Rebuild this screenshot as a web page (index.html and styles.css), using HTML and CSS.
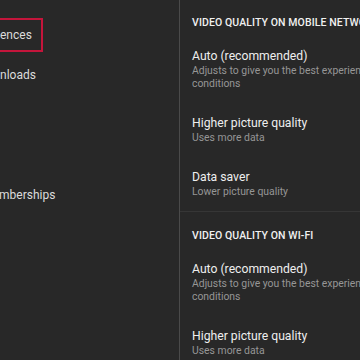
FILE: index.html
```html
<!DOCTYPE html>
<html lang="en">
   <head>
      <meta charset="UTF-8" />
      <meta name="viewport" content="width=device-width, initial-scale=1.0" />
      <title>Settings</title>
      <link rel="stylesheet" href="styles.css">
   </head>
   <body>
      <div class="page">
         <nav class="sidebar">
            <div class="nav-item"><span class="nav-label focused">ences</span></div>
            <div class="nav-item">nloads</div>
            <div class="nav-item"></div>
            <div class="nav-item"></div>
            <div class="nav-item"><span class="nav-label cut">mberships</span></div>
         </nav>
         <main class="content">
            <section class="group">
               <h2>Video quality on mobile networks</h2>
               <div class="option">
                  <div class="title">Auto (recommended)</div>
                  <div class="sub">Adjusts to give you the best experience for your<br />conditions</div>
               </div>
               <div class="option">
                  <div class="title">Higher picture quality</div>
                  <div class="sub">Uses more data</div>
               </div>
               <div class="option">
                  <div class="title">Data saver</div>
                  <div class="sub">Lower picture quality</div>
               </div>
            </section>
            <section class="group">
               <h2>Video quality on Wi-Fi</h2>
               <div class="option">
                  <div class="title">Auto (recommended)</div>
                  <div class="sub">Adjusts to give you the best experience for your<br />conditions</div>
               </div>
               <div class="option">
                  <div class="title">Higher picture quality</div>
                  <div class="sub">Uses more data</div>
               </div>
               <div class="option">
                  <div class="title">Data saver</div>
                  <div class="sub">Lower picture quality</div>
               </div>
            </section>
         </main>
      </div>
   </body>
</html>
```
FILE: styles.css
```css
body {
   margin: 0;
   padding: 0;
   background-color: #282828;
   font-family: Roboto, 'Liberation Sans', sans-serif;
   overflow: hidden;
}

div.page {
   display: flex;
   width: 360px;
   height: 360px;
   overflow: hidden;
}

nav.sidebar {
   flex: none;
   width: 179px;
   padding-top: 15px;
   border-right: 1px solid #4a4a4a;
   overflow: hidden;
}

div.nav-item {
   height: 40px;
   line-height: 40px;
   font-size: 12px;
   color: #dcdcdc;
   white-space: nowrap;
}

span.nav-label.focused {
   display: inline-block;
   margin: 3px 0 0 -13px;
   padding: 0 9px 0 11px;
   height: 30px;
   line-height: 30px;
   border: 2px solid #c4153b;
   vertical-align: top;
}

span.nav-label.cut {
   display: inline-block;
   margin-left: -1px;
}

main.content {
   flex: none;
   width: 340px;
   padding-left: 12px;
   white-space: nowrap;
}

section.group {
   padding-top: 16px;
}

section.group + section.group {
   border-top: 1px solid #363636;
   margin-left: -12px;
   padding-left: 12px;
   padding-top: 17px;
}

h2 {
   margin: 0 0 6px;
   font-size: 10.5px;
   line-height: 14px;
   font-weight: 500;
   letter-spacing: 0.1px;
   text-transform: uppercase;
   color: #f1f1f1;
}

div.option {
   padding: 12px 0 13px;
}

div.title {
   font-size: 12.2px;
   line-height: 16px;
   color: #eeeeee;
}

div.sub {
   font-size: 10.4px;
   line-height: 13px;
   color: #969696;
}
```
